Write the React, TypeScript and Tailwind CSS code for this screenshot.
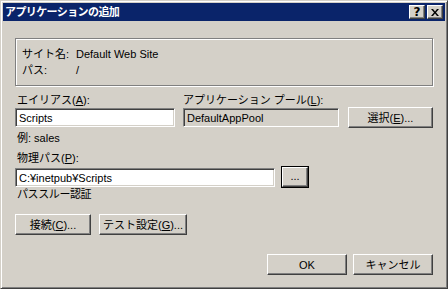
import React from 'react';

// ── classic win32 bevels ──────────────────────────────────────────────────────

const raised =
    'bg-[#d4d0c8] border border-t-white border-l-white border-r-[#404040] border-b-[#404040] shadow-[inset_-1px_-1px_0_#808080,inset_1px_1px_0_#d4d0c8]';
const sunken =
    'border border-t-[#808080] border-l-[#808080] border-r-white border-b-white shadow-[inset_1px_1px_0_#404040,inset_-1px_-1px_0_#d4d0c8]';

function Button({ children, className = '' }: { children: React.ReactNode; className?: string }) {
    return (
        <div className={`${raised} h-[21px] flex items-center justify-center ${className}`}>
            {children}
        </div>
    );
}

function Field({ value, className = '' }: { value: string; className?: string }) {
    return (
        <div className={`${sunken} h-[19px] flex items-center pl-[3px] ${className}`}>
            {value}
        </div>
    );
}

function TitleButton({ children }: { children: React.ReactNode }) {
    return (
        <div className={`${raised} w-[16px] h-[14px] flex items-center justify-center text-black`}>
            {children}
        </div>
    );
}

// ── dialog ────────────────────────────────────────────────────────────────────

export default function App() {
    return (
        <div className="w-[448px] h-[289px] bg-[#d4d0c8] border border-t-[#d4d0c8] border-l-[#d4d0c8] border-r-[#404040] border-b-[#404040] shadow-[inset_1px_1px_0_#fff,inset_-1px_-1px_0_#808080] p-[2px] text-[11px] leading-[16px] text-black font-['Liberation_Sans','Noto_Sans_CJK_JP',sans-serif] flex flex-col">
            {/* Title bar */}
            <div className="h-[18px] bg-[#0a246a] flex items-start justify-between pl-[2px] pr-[2px]">
                <span className="text-white font-bold text-[11px] leading-[18px] tracking-[-0.6px]">アプリケーションの追加</span>
                <div className="flex gap-[2px] mt-[2px]">
                    <TitleButton>
                        <span className="font-bold text-[12px] leading-none font-['DejaVu_Sans',sans-serif]">?</span>
                    </TitleButton>
                    <TitleButton>
                        <svg width="8" height="7" viewBox="0 0 8 7">
                            <path d="M0 0h2l2 2.5L6 0h2L5 3.5 8 7H6L4 4.5 2 7H0l3-3.5z" fill="#000" />
                        </svg>
                    </TitleButton>
                </div>
            </div>

            {/* Body */}
            <div className="flex flex-col px-[12px]">
                {/* Site info */}
                <div className="mt-[17px] h-[48px] border border-[#808080] shadow-[1px_1px_0_#fff,inset_1px_1px_0_#fff] pt-[7px] pl-[6px]">
                    <div className="flex">
                        <span className="w-[54px]">サイト名:</span>
                        <span>Default Web Site</span>
                    </div>
                    <div className="flex">
                        <span className="w-[54px]">パス:</span>
                        <span>/</span>
                    </div>
                </div>

                {/* Alias / pool */}
                <div className="flex mt-[6px] pl-[2px]">
                    <span className="w-[166px]">
                        エイリアス(<u>A</u>):
                    </span>
                    <span>
                        アプリケーション プール(<u>L</u>):
                    </span>
                </div>
                <div className="flex items-start">
                    <Field value="Scripts" className="w-[160px] bg-white" />
                    <Field value="DefaultAppPool" className="w-[156px] ml-[8px] bg-[#d4d0c8]" />
                    <Button className="w-[85px] ml-[9px] -mt-px">
                        選択(<u>E</u>)...
                    </Button>
                </div>
                <div className="pl-[2px] mt-[2px]">例: sales</div>

                {/* Physical path */}
                <div className="pl-[2px] mt-[4px]">
                    物理パス(<u>P</u>):
                </div>
                <div className="flex items-start">
                    <Field value="C:¥inetpub¥Scripts" className="w-[260px] bg-white mt-[2px]" />
                    <div className="ml-[6px] w-[28px] h-[22px] border border-black">
                        <div className={`${raised} w-full h-full flex items-center justify-center leading-none pb-[2px]`}>
                            ...
                        </div>
                    </div>
                </div>
                <div className="pl-[2px] leading-[12px] tracking-[-0.4px]">パススルー認証</div>

                <div className="flex mt-[14px] gap-[8px]">
                    <Button className="w-[76px]">
                        接続(<u>C</u>)...
                    </Button>
                    <Button className="w-[88px]">
                        テスト設定(<u>G</u>)...
                    </Button>
                </div>

                {/* Footer */}
                <div className="flex justify-end mt-[19px] gap-[6px]">
                    <Button className="w-[80px]">OK</Button>
                    <Button className="w-[80px]">キャンセル</Button>
                </div>
            </div>
        </div>
    );
}
